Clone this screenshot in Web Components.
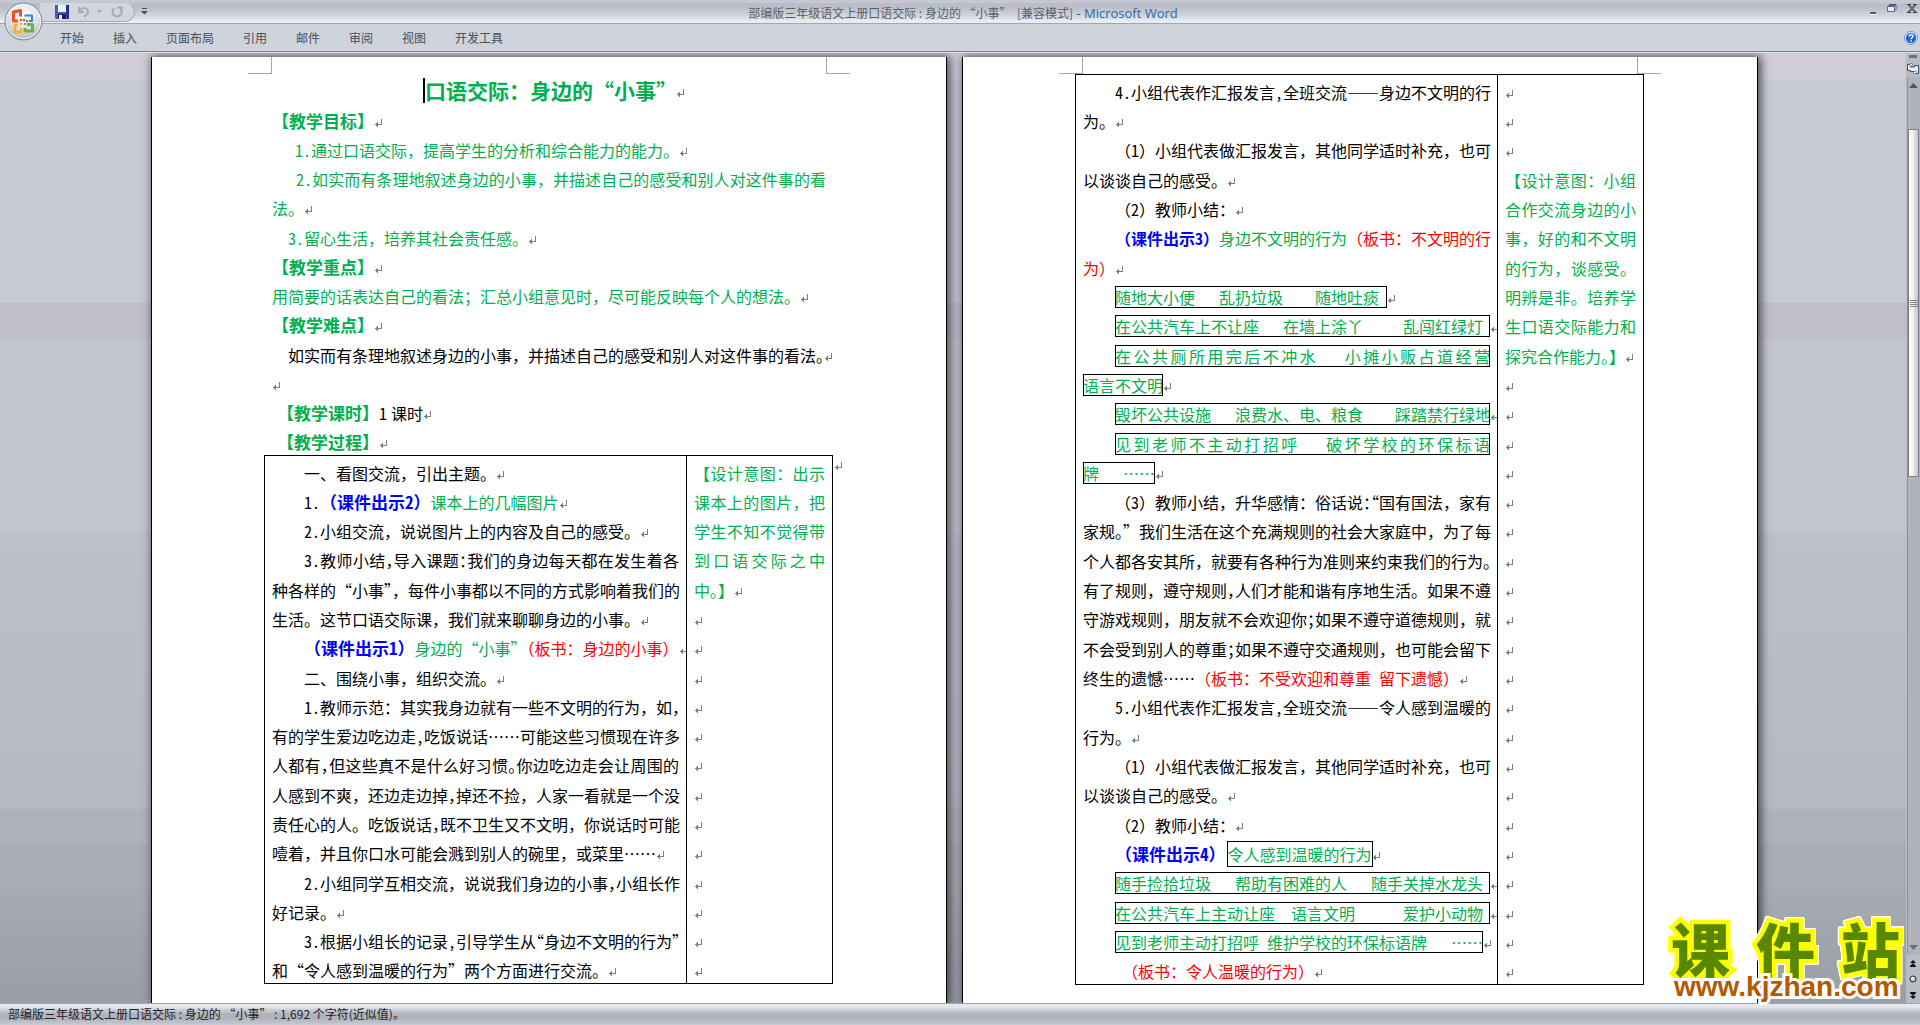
<!DOCTYPE html>
<html lang="zh-CN">
<head>
<meta charset="utf-8">
<title>部编版三年级语文上册口语交际：身边的“小事” - Microsoft Word</title>
<style>
html,body{margin:0;height:100%}
body{font-family:"Noto Sans CJK SC",sans-serif;overflow:hidden}
</style>
</head>
<body>
<word-window></word-window>
<script>
function define(name, html) {
  const tpl = document.createElement('template');
  tpl.innerHTML = html;
  customElements.define(name, class extends HTMLElement {
    constructor() {
      super();
      this.attachShadow({ mode: 'open' }).appendChild(tpl.content.cloneNode(true));
    }
  });
}

/* Paragraph mark */
define('para-mark', `
<style>:host{display:block;flex:none;width:7px;height:9px;white-space:normal;line-height:0}svg{display:block}</style>
<svg width="7" height="9" viewBox="0 0 7 9" shape-rendering="crispEdges"><path d="M6.5 0v6M1 5.5h6" stroke="#808080" fill="none"/><path d="M3 3v5h-1V3zM1 4v3h1V4zM0 5h2v1H0z" fill="#808080"/></svg>`);

/* One line of the document: attributes fill, soft (no paragraph mark), boxed */
define('doc-line', `
<style>
:host{display:flex;align-items:center;box-sizing:border-box;padding-top:4px;padding-left:var(--in,0px);min-width:0;min-height:0;
 font-size:16px;line-height:20px;white-space:pre;text-spacing-trim:space-all}
.t{flex:none}
:host([fill]) .t{flex:1 0 0;min-width:0;text-align:justify;text-align-last:justify}
:host([boxed]) .t{outline:1px solid #000;outline-offset:-1px;padding:1px 0}
para-mark{margin:5px -8px 0 1px}
:host([soft]) para-mark{display:none}
</style>
<span class="t"><slot></slot></span><para-mark></para-mark>`);

/* Two column teaching table: the plan and the notes beside it */
define('plan-table', `
<style>
:host{display:block;position:relative;margin-left:-8px;margin-right:-7px}
table{border-spacing:0;width:100%;table-layout:fixed;border:solid #000;border-width:1px 0 0 1px;box-sizing:border-box}
td{padding:0;border:solid #000;border-width:0 1px 1px 0;vertical-align:top}
td:last-child{width:145px}
div{display:grid;grid-auto-rows:1fr;height:var(--rows-height);padding:0 7px;overflow:hidden;box-sizing:border-box}
para-mark{position:absolute;left:100%;top:7px;margin-left:2px;display:none}
:host([endmark]) para-mark{display:block}
</style>
<table><tbody><tr><td><div><slot name="plan"></slot></div></td><td><div><slot name="note"></slot></div></td></tr></tbody></table><para-mark></para-mark>`);

define('doc-page', `
<style>
:host{display:block;flex:none;width:794px;background:#fff;border:solid #000;border-width:0 1px;box-shadow:2px 0 9px 1px rgba(30,30,40,.75)}
.margin{display:flex;justify-content:space-between;padding:0 96px}
.margin i{width:23px;height:16px;border:solid #a5a5ad;border-width:0 1px 1px 0}
.margin i:last-child{border-width:0 0 1px 1px}
.body{padding:0 120px}
</style>
<div class="margin"><i></i><i></i></div><div class="body"><slot></slot></div>`);

/* Text markup: ~p half-width punctuation, {c:text} coloured run, runs of blanks are 8px each,
   digits and Latin stops are set half-width */
function rich(s) {
  return s.replace(/\{(\w):|\}|~(.)| +|[0-9.,]+/g, (m, cls, punct) => {
    if (cls) return `<span class="${cls}">`;
    if (m === '}') return '</span>';
    if (punct) return `<span class="h">${punct}</span>`;
    if (m[0] === ' ') return `<span class="s" style="--n:${m.length}">${m}</span>`;
    return `<span class="d">${m}</span>`;
  });
}
/* Line: [indent, flags, text]; flags f fill, s soft end, x boxed, g green */
function line([indent, flags, text], slot) {
  const a = [];
  if (slot) a.push(`slot="${slot}"`);
  if (flags.includes('f')) a.push('fill');
  if (flags.includes('s')) a.push('soft');
  if (flags.includes('x')) a.push('boxed');
  if (/[gx]/.test(flags)) a.push('class="g"');
  if (indent) a.push(`style="--in:${indent}px"`);
  return `<doc-line ${a.join(' ')}>${rich(text)}</doc-line>`;
}
const blank = n => Array.from({ length: n }, () => [0, '', '']);

const intro = [
  [0, '', '{G:【教学目标】}'],
  [23, 'g', '1.通过口语交际，提高学生的分析和综合能力的能力。'],
  [24, 'gfs', '2.如实而有条理地叙述身边的小事，并描述自己的感受和别人对这件事的看'],
  [0, 'g', '法。'],
  [16, 'g', '3.留心生活，培养其社会责任感。'],
  [0, '', '{G:【教学重点】}'],
  [0, 'g', '用简要的话表达自己的看法；汇总小组意见时，尽可能反映每个人的想法。'],
  [0, '', '{G:【教学难点】}'],
  [16, '', '如实而有条理地叙述身边的小事，并描述自己的感受和别人对这件事的看法~。'],
  [0, '', ''],
  [5, '', '{G:【教学课时】}1{k: }课时'],
  [5, '', '{G:【教学过程】}']
];
const plan1 = [
  [32, '', '一、看图交流，引出主题。'],
  [32, '', '1.{B:（课件出示2）}{g:课本上的几幅图片}'],
  [32, '', '2.小组交流，说说图片上的内容及自己的感受。'],
  [32, 'fs', '3.教师小结~，导入课题~：我们的身边每天都在发生着各'],
  [0, 'fs', '种各样的“小事~”，每件小事都以不同的方式影响着我们的'],
  [0, '', '生活。这节口语交际课，我们就来聊聊身边的小事。'],
  [32, '', '{B:（课件出示1）}{g:身边的“小事”}{r:~（板书：身边的小事）}'],
  [32, '', '二、围绕小事，组织交流。'],
  [32, 'fs', '1.教师示范：其实我身边就有一些不文明的行为，如~，'],
  [0, 'fs', '有的学生爱边吃边走,吃饭说话……可能这些习惯现在许多'],
  [0, 'fs', '人都有~，但这些真不是什么好习惯~。你边吃边走会让周围的'],
  [0, 'fs', '人感到不爽，还边走边掉~，掉还不捡，人家一看就是一个没'],
  [0, 'fs', '责任心的人。吃饭说话~，既不卫生又不文明，你说话时可能'],
  [0, '', '噎着，并且你口水可能会溅到别人的碗里，或菜里……'],
  [32, 'fs', '2.小组同学互相交流，说说我们身边的小事~，小组长作'],
  [0, '', '好记录。'],
  [32, 'fs', '3.根据小组长的记录,引导学生从~“身边不文明的行为~”'],
  [0, '', '和“令人感到温暖的行为”两个方面进行交流。']
];
const note1 = [
  [0, 'gfs', '【设计意图：出示'],
  [0, 'gfs', '课本上的图片，把'],
  [0, 'gfs', '学生不知不觉得带'],
  [0, 'gfs', '到口语交际之中'],
  [0, 'g', '中~。】'],
  ...blank(13)
];
const plan2 = [
  [32, 'fs', '4.小组代表作汇报发言,全班交流——身边不文明的行'],
  [0, '', '为。'],
  [32, 'fs', '（1）小组代表做汇报发言，其他同学适时补充，也可'],
  [0, '', '以谈谈自己的感受。'],
  [32, '', '（2）教师小结：'],
  [32, 'fs', '{b:（课件出示3）}{g:身边不文明的行为}{r:（板书：不文明的行}'],
  [0, '', '{r:为）}'],
  [32, 'x', '随地大小便   乱扔垃圾    随地吐痰 '],
  [32, 'xf', '在公共汽车上不让座   在墙上涂丫     乱闯红绿灯 '],
  [32, 'xfs', '在公共厕所用完后不冲水   小摊小贩占道经营'],
  [0, 'x', '语言不文明'],
  [32, 'xf', '毁坏公共设施   浪费水、电、粮食    踩踏禁行绿地'],
  [32, 'xfs', '见到老师不主动打招呼   破坏学校的环保标语'],
  [0, 'x', '牌   ……'],
  [32, 'fs', '（3）教师小结，升华感情：俗话说~：~“国有国法，家有'],
  [0, 'fs', '家规~。”我们生活在这个充满规则的社会大家庭中，为了每'],
  [0, 'fs', '个人都各安其所，就要有各种行为准则来约束我们的行为~。'],
  [0, 'fs', '有了规则，遵守规则~，人们才能和谐有序地生活。如果不遵'],
  [0, 'fs', '守游戏规则，朋友就不会欢迎你~；如果不遵守道德规则，就'],
  [0, 'fs', '不会受到别人的尊重~；如果不遵守交通规则，也可能会留下'],
  [0, '', '终生的遗憾……{r:（板书：不受欢迎和尊重 留下遗憾）}'],
  [32, 'fs', '5.小组代表作汇报发言,全班交流——令人感到温暖的'],
  [0, '', '行为。'],
  [32, 'fs', '（1）小组代表做汇报发言，其他同学适时补充，也可'],
  [0, '', '以谈谈自己的感受。'],
  [32, '', '（2）教师小结：'],
  [32, '', '{B:（课件出示4）}{x:令人感到温暖的行为}'],
  [32, 'xf', '随手捡拾垃圾   帮助有困难的人   随手关掉水龙头 '],
  [32, 'xf', '在公共汽车上主动让座  语言文明      爱护小动物 '],
  [32, 'x', '见到老师主动打招呼 维护学校的环保标语牌   ……'],
  [39, '', '{r:（板书：令人温暖的行为）}']
];
const note2 = [
  ...blank(3),
  [0, 'gfs', '【设计意图：小组'],
  [0, 'gfs', '合作交流身边的小'],
  [0, 'gfs', '事，好的和不文明'],
  [0, 'gfs', '的行为，谈感受。'],
  [0, 'gfs', '明辨是非。培养学'],
  [0, 'gfs', '生口语交际能力和'],
  [0, 'g', '探究合作能力~。】'],
  ...blank(21)
];

define('word-document', `
<style>
:host{display:flex;justify-content:center;gap:15px;padding-left:3px;flex:1;min-width:0;overflow:hidden;padding-top:4px;
 background:linear-gradient(#d0cdd8 27px,#c7cad3 27px 250px,#c1becb 250px 285px,#c2c5cd 285px 480px,#bcc0c9 480px,#b6b9c2 756px,#afb2ba 756px 792px,#a9acb4 792px 830px,#a2a5ad 877px,#9a9ea7)}
doc-line{color:#000}
doc-line.g,.g,.x{color:#00b050}
.r{color:#f00}
.G,.B{font-weight:bold;font-size:17px}
.G{color:#00b050}
.B,.b{color:#00f;font-weight:bold}
.h{font-feature-settings:"halt"}
.d{font-feature-settings:"hwid"}
.s{display:inline-block;width:calc(var(--n)*8px);height:16px;overflow:hidden;vertical-align:top;text-align-last:left}
.k .s{width:4px}
.x{outline:1px solid #000;margin-left:2px}
h1{display:flex;justify-content:center;align-items:center;margin:0;height:30px;padding:2px 0 0 4px;box-sizing:border-box;font-size:21px;line-height:28px;color:#00b050;text-spacing-trim:space-all}
h1 i{width:2px;height:25px;background:#000;margin-left:-2px}
h1 para-mark{margin:6px -7px 0 0}
.intro{display:grid;grid-auto-rows:1fr;height:351px}
plan-table{--rows-height:527px}
plan-table.long{--rows-height:909px}
</style>
<doc-page><h1><i></i>口语交际：身边的“小事”<para-mark></para-mark></h1>
<div class="intro">${intro.map(l => line(l)).join('')}</div>
<plan-table endmark>${plan1.map(l => line(l, 'plan')).join('')}${note1.map(l => line(l, 'note')).join('')}</plan-table></doc-page>
<doc-page><plan-table class="long">${plan2.map(l => line(l, 'plan')).join('')}${note2.map(l => line(l, 'note')).join('')}</plan-table></doc-page>`);

define('scroll-rail', `
<style>
:host{display:flex;flex-direction:column;align-items:center;width:14px;flex:none;background:#b9bcc5;padding-top:2px}
button{border:0;padding:0;margin:0;background:none;width:14px;display:block;height:16px}
svg{display:block;margin:auto}
.split{width:8px;height:3px;background:#6f7178;margin-bottom:3px}
.track{flex:1;width:12px;border-left:1px solid #8f929a;background:#b0b3bc;display:flex;flex-direction:column;align-items:center}
.thumb{width:11px;height:348px;margin-top:36px;border:1px solid #7d8088;background:linear-gradient(90deg,#fbf9f0 3px,#e6e6f0 5px,#cdd2de 7px,#c2c7d3);box-sizing:border-box;display:grid;place-content:center;gap:1px}
.thumb i{width:8px;height:1px;background:#888b94}
.fill{flex:1}
</style>
<div class="split"></div>
<button aria-label="标尺"><svg width="12" height="12" viewBox="0 0 12 12"><path d="M.5 1.500h3v2.500h4v-1.500h4v8h-4v-2h-4v-1h-3z" fill="#f4eef4" stroke="#34506e"/><circle cx="4" cy="1.800" r="1.500" fill="#fff" stroke="#34506e" stroke-width=".6"/><circle cx="8" cy="9.500" r="1.500" fill="#fff" stroke="#34506e" stroke-width=".6"/></svg></button>
<div class="track"><button aria-label="向上"><svg width="9" height="5"><path d="M0 5L4.500 0 9 5z" fill="#4d5763"/></svg></button>
<div class="thumb"><i></i><i></i><i></i><i></i></div><div class="fill"></div>
<button aria-label="向下"><svg width="9" height="5"><path d="M0 0L4.500 5 9 0z" fill="#66707e"/></svg></button></div>
<button aria-label="上一页"><svg width="6" height="7"><path d="M3 0L6 3H0zM3 3L6 6H0zM0 6h6v1H0z" fill="#111"/></svg></button>
<button aria-label="选择浏览对象"><svg width="8" height="8"><circle cx="4" cy="4" r="3" fill="#c9cac6" stroke="#222"/><circle cx="3.300" cy="3" r="1.200" fill="#fff"/></svg></button>
<button aria-label="下一页"><svg width="6" height="7"><path d="M3 7L0 4h6zM3 4L0 1h6zM0 0h6v1H0z" fill="#111"/></svg></button>`);

define('title-bar', `
<style>
:host{display:grid;grid-template-columns:1fr auto 1fr;align-items:center;height:24px;border-bottom:1px solid #a3a7b1;box-sizing:border-box;font-size:12px;line-height:18px;
 background:linear-gradient(#c5c9d3 3px,#bbbec7 3px 7px,#c0c3cc 8px 10px,#c7cad2 11px 13px,#d0d3da 14px 16px,#dbdee2 17px 19px,#e8ebf2 20px)}
button{border:0;padding:0;margin:0;background:none;display:block;flex:none}
svg{display:block}
.left{display:flex;align-items:center}
.qat{display:flex;align-items:center;box-sizing:border-box;margin-left:40px;width:95px;height:20px;padding-left:14px;border:1px solid #b4b8c2;border-color:#c3c6cf #a5a9b4 #a5a9b4 transparent;border-radius:0 10px 10px 0;background:#d3d6df}
.undo{margin-left:8px}.arr{margin-left:7px}.redo{margin-left:9px}
.more{margin-left:6px}
h1{margin:0;padding:2px 0 0 6px;font-size:12px;line-height:18px;font-weight:normal;color:#5b5f68;white-space:pre;font-family:"Noto Sans CJK SC",sans-serif}
h1 span{color:#2f66a6;font-family:"Open Sans",sans-serif;font-size:13px}
.win{display:flex;gap:10px;align-items:center;justify-content:flex-end;padding-right:3px;height:16px;align-self:flex-start}
</style>
<div class="left"><div class="qat">
<button aria-label="保存"><svg width="14" height="14" viewBox="0 0 14 14"><path d="M0 0h14v14H1l-1-1z" fill="#4a58b8"/><path d="M3 0h8v7H3z" fill="#e9f1fb"/><path d="M11 0h3v14h-2z" fill="#23307f"/><path d="M3 9h8v5H3z" fill="#16206a"/><path d="M4 10h3v4H4z" fill="#eef"/></svg></button>
<button class="undo" aria-label="撤销"><svg width="13" height="12" viewBox="0 0 13 12"><path d="M2 1v5h5M2 6C4 1 11 1 11 5c0 2-1 4-4 6" fill="none" stroke="#a7abb6" stroke-width="2"/></svg></button>
<button class="arr" aria-label="撤销列表"><svg width="5" height="3"><path d="M0 0h5L2.500 3z" fill="#a0a4ae"/></svg></button>
<button class="redo" aria-label="恢复"><svg width="12" height="12" viewBox="0 0 12 12"><path d="M3 2C0 6 2 10.500 6 10.500s6-4.500 3.500-8M6 1.500h4.500V6" fill="none" stroke="#a7abb6" stroke-width="2"/></svg></button>
</div>
<button class="more" aria-label="自定义快速访问工具栏"><svg width="7" height="7"><path d="M1 0h5v1H1zM0 3h7L3.500 6.500z" fill="#4a4e58"/></svg></button></div>
<h1>部编版三年级语文上册口语交际 : 身边的 “小事”  [兼容模式]<span> - Microsoft Word</span></h1>
<div class="win">
<button aria-label="最小化"><svg width="8" height="13"><path d="M1 10h6v2H1z" fill="#555a63"/><path d="M1 12h6v1H1z" fill="#fff"/></svg></button>
<button aria-label="还原"><svg width="10" height="8" viewBox="0 0 10 8"><path d="M2 1h7v5H2z" fill="#eef" stroke="#566075"/><path d="M2 0h7v2H2z" fill="#566075"/><path d="M.500 2.500h7v5h-7z" fill="#e4ebf5" stroke="#566a92"/></svg></button>
<button aria-label="关闭"><svg width="10" height="9" viewBox="0 0 10 9"><path d="M1 0l8 9M9 0L1 9" stroke="#5e6676" stroke-width="2"/><path d="M0 .5h4M6 .5h4M0 8.500h4M6 8.500h4" stroke="#444"/></svg></button>
</div>`);

define('ribbon-tabs', `
<style>
:host{display:flex;align-items:center;height:27px;padding:0 2px 0 60px;background:#cfd3dc;border-bottom:1px solid #7b818a;gap:29px;box-sizing:content-box}
button{border:0;padding:0;margin:0;background:none;font:12px/18px "Noto Sans CJK SC",sans-serif;color:#4a4e58;flex:none}
.help{margin-left:auto}
svg{display:block}
</style>
<button>开始</button><button>插入</button><button>页面布局</button><button>引用</button><button>邮件</button><button>审阅</button><button>视图</button><button>开发工具</button>
<button class="help" aria-label="帮助"><svg width="14" height="14" viewBox="0 0 14 14"><circle cx="7" cy="7" r="6.500" fill="#fff" stroke="#6f93c4"/><circle cx="7" cy="7" r="5.200" fill="#1f62cf"/><path d="M5 5.600C5 3 9.300 3.200 9 5.500 8.800 6.800 7 6.800 7 8.300" fill="none" stroke="#fff" stroke-width="1.500"/><path d="M6.200 9.200h1.600v1.500H6.200z" fill="#fff"/></svg></button>`);

define('office-button', `
<style>:host{position:absolute;left:4px;top:2px}button{border:0;padding:0;background:none;display:block}svg{display:block}</style>
<button aria-label="Office 按钮"><svg width="39" height="39" viewBox="0 0 39 39">
<defs><radialGradient id="o" cx=".5" cy=".3" r=".7"><stop offset="0" stop-color="#fdfdfe"/><stop offset=".6" stop-color="#dadde3"/><stop offset="1" stop-color="#b4b7bf"/></radialGradient></defs>
<circle cx="19.500" cy="19.500" r="18.500" fill="url(#o)" stroke="#858992"/>
<circle cx="19.500" cy="19.500" r="17" fill="none" stroke="#f4f5f7"/>
<g fill="none" stroke-linejoin="round">
<path d="M14 19H9.500V10l7-1.500v6" stroke="#ea5420" stroke-width="3"/>
<path d="M20.500 13.500H28V19h-3" stroke="#3f86cf" stroke-width="2"/>
<path d="M14 23h-3v7h6v-4" stroke="#f4b51d" stroke-width="2.500"/>
<path d="M23 22.500h5.500V29H21v-3" stroke="#6cb33e" stroke-width="3"/></g>
<path d="M16 17h2v2h-2zM19 17h2v2h-2z" fill="#d94a20"/><path d="M22 18h2v2h-2z" fill="#3f86cf"/><path d="M16 21h2v2h-2z" fill="#f4b51d"/><path d="M20 21h2v2h-2z" fill="#6cb33e"/>
</svg></button>`);

define('status-bar', `
<style>:host{display:flex;align-items:center;height:22px;box-sizing:border-box;border-top:1px solid #a3a6af;padding:0 8px 1px;font-size:12px;line-height:18px;color:#1f2227;white-space:pre;
background:linear-gradient(#e6e8ee 3px,#c9ccd4 6px,#babdc5 9px,#b0b3bb 10px 14px,#bcbfc8 18px,#c9ccd6)}</style><span>部编版三年级语文上册口语交际 : 身边的 “小事” : 1,692 个字符(近似值)。</span>`);

define('site-mark', `
<style>
:host{position:absolute;right:20px;bottom:22px;width:229px}
b,a{display:block;paint-order:stroke fill;white-space:nowrap}
b{font-size:59px;line-height:58px;font-weight:900;color:#5a8700;-webkit-text-stroke:9px #ff0;text-align-last:justify;filter:drop-shadow(1px 0 #fff) drop-shadow(-1px 0 #fff) drop-shadow(0 1px #fff) drop-shadow(0 -1px #fff)}
a{font:bold 28px/32px "Liberation Sans",sans-serif;color:#b35900;-webkit-text-stroke:6px #fff;text-decoration:none;padding-left:3px;margin-top:-6px;position:relative}
</style>
<b>课件站</b><a href="#">www.kjzhan.com</a>`);

define('word-window', `
<style>
:host{display:flex;flex-direction:column;height:100vh;position:relative;overflow:hidden;background:#d0cdd8}
main{display:flex;flex:1;min-height:0;border-top:1px solid #dfe2e8}
</style>
<title-bar></title-bar><ribbon-tabs></ribbon-tabs>
<main><word-document></word-document><scroll-rail></scroll-rail></main>
<status-bar></status-bar><office-button></office-button><site-mark></site-mark>`);
</script>
</body>
</html>
